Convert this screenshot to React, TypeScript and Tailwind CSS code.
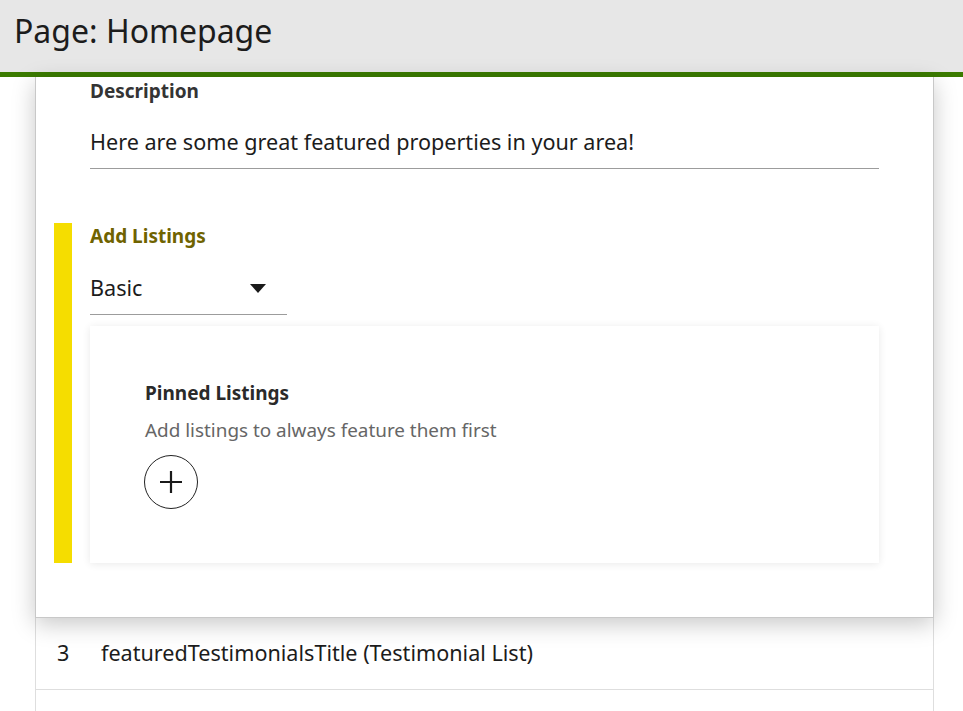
import React from 'react';

function Caret() {
  return (
    <svg width="16" height="9" viewBox="0 0 16 9" className="shrink-0">
      <path d="M0 0 L16 0 L8 9 Z" fill="#1a1a1a" />
    </svg>
  );
}

function PlusButton() {
  return (
    <button className="w-[54px] h-[54px] rounded-full border border-[#222] flex items-center justify-center bg-white">
      <svg width="24" height="24" viewBox="0 0 24 24">
        <path d="M12 1 V23 M1 12 H23" stroke="#1a1a1a" strokeWidth="2.2" fill="none" />
      </svg>
    </button>
  );
}

export default function App() {
  return (
    <div className="h-[711px] bg-white font-['Noto_Sans','Open_Sans',sans-serif] overflow-hidden">
      {/* Header */}
      <header className="h-[77px] bg-[#e7e7e7] border-b-[5px] border-[#3b7b00] flex items-center px-[14px]">
        <h1 className="text-[32px] leading-none text-[#1c1c1c] -mt-[10px]">Page: Homepage</h1>
      </header>

      <div className="mx-[35px] w-[899px]">
        {/* Expanded section card */}
        <div className="relative z-10 bg-white border-x border-b border-[#c8c8c8] shadow-[0_6px_22px_rgba(0,0,0,0.22)] pl-[54px] pr-[54px] pt-[2px] pb-[54px]">
          <div className="text-[19px] leading-[24px] font-bold text-[#343434]">Description</div>
          <div className="mt-[25px] pb-[12px] border-b border-[#9c9c9c] text-[21.6px] leading-[28px] text-[#1c1c1c]">
            Here are some great featured properties in your area!
          </div>

          {/* Add listings */}
          <div className="mt-[54px] relative -ml-[36px] pl-[36px]">
            <div className="absolute left-0 top-0 bottom-0 w-[18px] bg-[#f5dd00]" />
            <div className="text-[19px] leading-[24px] font-bold text-[#6f6300] pt-[1px]">Add Listings</div>
            <div className="mt-[26px] w-[197px] pb-[12px] border-b border-[#9c9c9c] flex items-center justify-between pr-[21px]">
              <span className="text-[21.6px] leading-[28px] text-[#1c1c1c]">Basic</span>
              <Caret />
            </div>
            <div className="mt-[11px] bg-white shadow-[0_1px_8px_rgba(0,0,0,0.09)] pl-[55px] pt-[55px] pb-[54px]">
              <div className="text-[19px] leading-[24px] font-bold text-[#2a2a2a]">Pinned Listings</div>
              <div className="mt-[13px] text-[18.9px] leading-[24px] text-[#666]">Add listings to always feature them first</div>
              <div className="mt-[13px] -ml-px">
                <PlusButton />
              </div>
            </div>
          </div>
        </div>

        {/* Rows */}
        <div className="h-[72px] border-x border-b border-[#dedede] flex items-center text-[21.6px] text-[#1c1c1c]">
          <span className="w-[65px] pl-[21px]">3</span>
          <span>featuredTestimonialsTitle (Testimonial List)</span>
        </div>
        <div className="h-[72px] border-x border-[#dedede]" />
      </div>
    </div>
  );
}
